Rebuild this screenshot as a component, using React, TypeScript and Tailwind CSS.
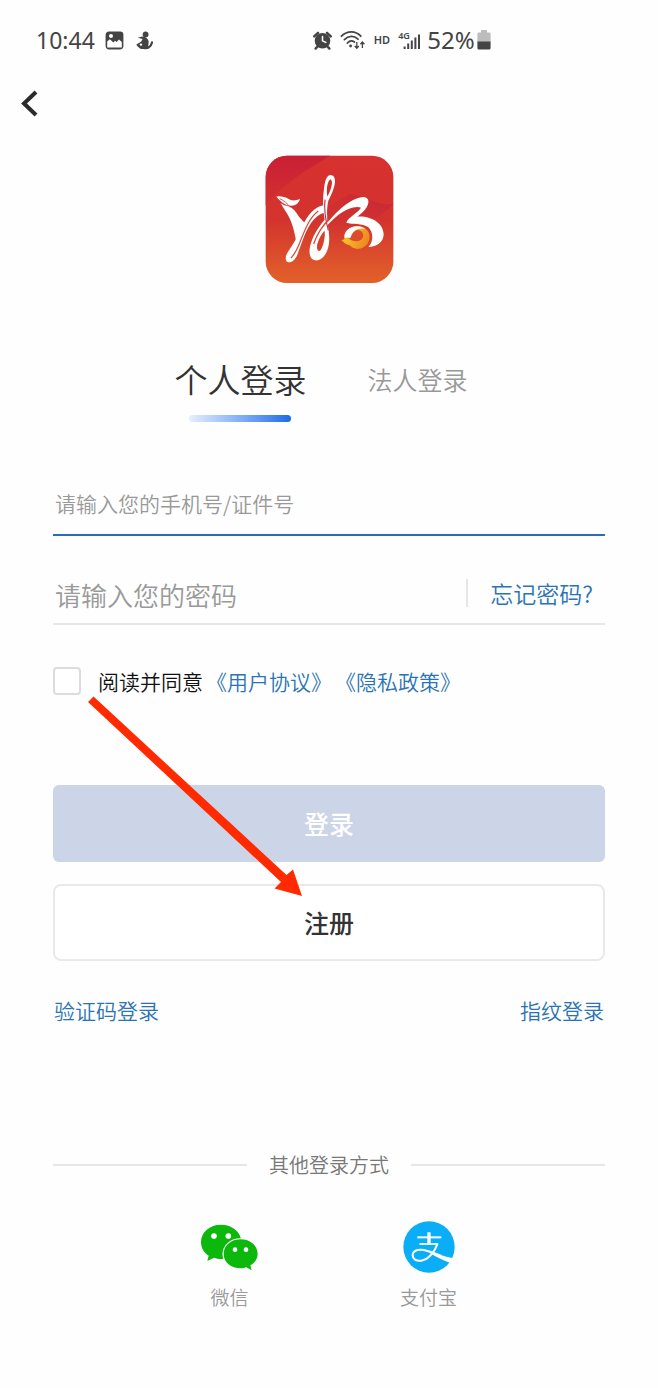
import type { ReactNode } from "react";

function PhotoIcon() {
  return (
    <svg className="h-[19px] w-[19px]" viewBox="0 0 19 19" aria-hidden="true">
      <rect x="1.3" y="1.3" width="16.4" height="16.4" rx="2.6" fill="#444" stroke="#444" strokeWidth="1.4" />
      <path d="M2.2 10.4 4.8 8.2 8.4 11.6 10 9.8 11.6 11 14 8.6 16.8 11V16.6H2.2Z" fill="#fff" />
      <circle cx="6" cy="5" r="2" fill="#fff" />
    </svg>
  );
}

function FigureIcon() {
  return (
    <svg className="h-[19px] w-[17px]" viewBox="0 0 17 19" aria-hidden="true">
      <circle cx="9.6" cy="3.4" r="2.9" fill="#444" />
      <path d="M1.8 6.8 6.2 5.4 9 6C12.4 7.6 13.2 10.4 12.4 13.2L12 18H5C3.4 16.8 1 15.4.4 13.4L5.2 10.6 6.6 8Z" fill="#444" />
      <path d="M7.6 16.6C11.4 18 15 16 16 11.4" fill="none" stroke="#444" strokeWidth="2.2" strokeLinecap="round" />
      <circle cx="4.9" cy="13.6" r="1.2" fill="#fff" />
    </svg>
  );
}

function AlarmIcon() {
  return (
    <svg className="h-[19px] w-[19px]" viewBox="0 0 19 19" aria-hidden="true">
      <circle cx="9.5" cy="9.8" r="7.8" fill="#444" />
      <path d="M1.2 5.4 5 1.8M14 1.8 17.8 5.4M4.4 15.6 2.6 17.6M14.6 15.6 16.4 17.6" stroke="#444" strokeWidth="2.4" strokeLinecap="round" />
      <path d="M9.5 5.4V9.8L12.8 11.4" fill="none" stroke="#fff" strokeWidth="1.5" strokeLinecap="round" />
    </svg>
  );
}

function WifiIcon() {
  return (
    <svg className="h-[20px] w-[26px]" viewBox="0 0 26 20" aria-hidden="true">
      <g fill="none" stroke="#444" strokeWidth="1.8" strokeLinecap="round">
        <path d="M1.4 6.2C7.2.4 15.6.4 20.8 6.2" />
        <path d="M4.4 9.6C8.4 5.6 14 5.4 18 9.2" />
        <path d="M7.4 13C9.6 10.6 12.2 10.4 14.4 12" />
      </g>
      <circle cx="10.6" cy="16" r="1.4" fill="#444" />
      <path d="M16.8 12V18M14.8 16 16.8 18.2 18.8 16M22.4 18V12.4M20.4 14.2 22.4 12 24.4 14.2" fill="none" stroke="#444" strokeWidth="1.3" />
    </svg>
  );
}

function SignalIcon() {
  return (
    <span className="grid">
      <span className="col-start-1 row-start-1 self-start text-[9px] leading-[9px] font-semibold">4G</span>
      <svg className="col-start-1 row-start-1 h-[19px] w-[23px]" viewBox="0 0 23 19" aria-hidden="true">
        <path d="M6.6 15.6V18M10.2 12.6V18M13.8 9.6V18M17.4 6.4V18M21 3.4V18" stroke="#444" strokeWidth="2" />
      </svg>
    </span>
  );
}

function BatteryIcon() {
  return (
    <svg className="h-[20px] w-[14px]" viewBox="0 0 14 20" aria-hidden="true">
      <path d="M4 0H10V2.4H12.4Q13.6 2.4 13.6 3.6V12H.4V3.6Q.4 2.4 1.6 2.4H4Z" fill="#bdbdbd" />
      <path d="M.4 11.4H13.6V18Q13.6 19.6 12 19.6H2Q.4 19.6.4 18Z" fill="#444" />
    </svg>
  );
}

function BrandLogo() {
  return (
    <svg className="h-[129px] w-[129px]" viewBox="28 32 387 387" role="img" aria-label="湘">
      <defs>
        <linearGradient id="logoBase" x1="0" y1="0" x2="0" y2="1">
          <stop offset="0" stopColor="#d73030" />
          <stop offset="0.5" stopColor="#d3332d" />
          <stop offset="1" stopColor="#e2622a" />
        </linearGradient>
        <linearGradient id="logoShade" x1="0" y1="0" x2="0" y2="1">
          <stop offset="0" stopColor="#c91f35" />
          <stop offset="1" stopColor="#d3302f" />
        </linearGradient>
        <linearGradient id="logoBand" x1="0.7" y1="0" x2="0.2" y2="1">
          <stop offset="0" stopColor="#c3203a" stopOpacity="0.55" />
          <stop offset="1" stopColor="#d6402b" stopOpacity="0" />
        </linearGradient>
        <linearGradient id="logoSwirl" x1="0" y1="0" x2="1" y2="0.4">
          <stop offset="0" stopColor="#fbd62e" />
          <stop offset="1" stopColor="#ee8a22" />
        </linearGradient>
        <clipPath id="logoClip">
          <rect x="30" y="34" width="383" height="382" rx="64" />
        </clipPath>
      </defs>
      <g clipPath="url(#logoClip)">
        <rect x="28" y="32" width="387" height="387" fill="url(#logoBase)" />
        <path d="M28 32H225C160 75 90 110 28 185Z" fill="url(#logoShade)" />
        <path d="M415 178C370 225 310 245 250 290L150 330V230L280 150C320 150 370 190 415 178Z" fill="url(#logoBand)" />
      </g>

      <path d="M93 184C108 188 117 196 126 211C133 222 143 231 152 240C140 260 128 284 123 306C120 273 111 236 95 209C88 197 81 187 74 175C80 180 86 183 93 184Z" fill="#fff" />
      <path d="M62 157C82 153 94 162 105 167C114 170 124 168 133 164C129 177 119 185 105 184C87 183 76 172 62 157Z" fill="#fff" />
      <path d="M72 163C84 168 94 177 106 190" fill="none" stroke="#d9352f" strokeWidth="2.5" />

      <path d="M204 183C178 186 155 213 140 246C127 275 113 300 99 319C90 331 87 345 94 352C104 358 118 348 125 331C137 301 147 264 166 236C177 220 190 209 205 205Z" fill="#fff" />
      <path d="M188 200C161 220 148 256 134 291C127 309 118 329 106 341" fill="none" stroke="#d9452e" strokeWidth="3.5" />

      <path d="M225 92C246 94 240 128 218 169C213 190 213 220 217 246C222 275 222 298 216 315C208 339 193 350 178 348C159 344 158 319 167 293C174 270 190 246 207 226C202 199 200 164 205 133C208 108 213 92 225 92Z" fill="#fff" />
      <path d="M225 105C215 109 211 135 215 157C226 137 234 112 225 105Z" fill="#d2302f" />
      <path d="M185 299C190 280 199 267 207 259C209 276 205 298 197 314C191 326 181 319 185 299Z" fill="#d83f2c" />
      <path d="M179 295C190 264 210 238 239 208C266 181 298 159 323 158C339 159 343 172 333 189C326 201 315 210 304 217C350 214 383 239 384 270C384 293 363 308 338 308C353 294 355 265 338 249C321 235 289 241 272 235C275 221 308 204 316 190C302 184 271 193 245 214C219 235 196 262 179 295Z" fill="#fff" />
      <path d="M208 166C205 193 209 225 218 258" fill="none" stroke="#b73649" strokeWidth="3.5" />
      <path d="M174 299C184 269 201 242 227 218" fill="none" stroke="#d9402e" strokeWidth="3.5" />

      <path d="M270 278C269 259 286 244 309 246C337 247 349 274 338 294C325 318 296 319 282 303C272 301 264 295 257 286C261 288 266 286 270 278Z" fill="url(#logoSwirl)" />
      <path d="M278 280C281 260 302 251 317 261C329 273 321 288 308 290C295 293 283 287 278 280Z" fill="#dc4c2b" />
      <path d="M266 282C263 261 284 244 307 246C315 246 322 249 328 254C309 248 291 258 284 281C278 278 273 279 266 282Z" fill="#fff" />
    </svg>
  );
}

function WechatIcon() {
  return (
    <svg className="h-[52px] w-[60px]" viewBox="32 46 180 156" aria-hidden="true">
      <path d="M95 57C61 57 35 80 35 109C35 126 43 141 58 150L54 166L74 156C81 158 88 160 95 160C129 160 156 137 156 109C156 80 129 57 95 57Z" fill="#0cb80c" />
      <path d="M154 101C125 101 103 120 103 145C103 170 125 188 154 188C160 188 166 187 171 185L187 194L183 179C197 171 205 159 205 145C205 120 183 101 154 101Z" fill="#0cb80c" stroke="#fff" strokeWidth="7" paintOrder="stroke" />
      <g fill="#fff">
        <circle cx="74" cy="91" r="8.5" />
        <circle cx="117" cy="91" r="8.5" />
        <circle cx="137" cy="132" r="7" />
        <circle cx="170" cy="132" r="7" />
      </g>
    </svg>
  );
}

function AlipayIcon() {
  return (
    <svg className="h-[52px] w-[52px]" viewBox="637 48 156 156" aria-hidden="true">
      <circle cx="715" cy="126" r="77" fill="#0aaef7" />
      <g fill="none" stroke="#fff">
        <path d="M680 97H752" strokeWidth="6" />
        <path d="M715 82V119" strokeWidth="10" />
        <path d="M686 117H741" strokeWidth="5" />
        <path d="M741 115C733 138 716 162 692 167C676 169 666 162 666 151C666 139 678 133 692 134C712 135 732 146 752 153" strokeWidth="6" />
      </g>
      <path d="M716 136C738 148 760 155 788 160L781 174C758 166 736 155 716 143Z" fill="#fff" />
    </svg>
  );
}

function Provider({ icon, label }: { icon: ReactNode; label: string }) {
  return (
    <button type="button" className="flex w-[60px] flex-col items-center gap-2.5">
      {icon}
      <span className="text-[19px] leading-7 whitespace-nowrap text-[#999]">{label}</span>
    </button>
  );
}

export default function App() {
  return (
    <div className="min-h-screen bg-[#fefefe] pb-16 font-['Noto_Sans_CJK_SC',sans-serif] font-[350] text-[#333]">
      <header>
        <div className="flex h-20 items-center pl-9 font-['Noto_Sans',sans-serif] font-normal text-[#444]">
          <span className="text-[23px]">10:44</span>
          <span className="ml-2.5 flex items-center gap-3">
            <PhotoIcon />
            <FigureIcon />
          </span>
          <span className="ml-40 flex items-center">
            <AlarmIcon />
            <span className="ml-2 flex"><WifiIcon /></span>
            <span className="ml-2 text-[11px] font-semibold">HD</span>
            <span className="ml-2 flex"><SignalIcon /></span>
            <span className="ml-1.5 text-2xl">52%</span>
            <span className="ml-0.5 flex"><BatteryIcon /></span>
          </span>
        </div>
        <div className="flex h-[46px] items-center pl-5">
          <button type="button" aria-label="返回" className="flex">
            <svg className="h-7 w-5" viewBox="0 0 20 28" fill="none" aria-hidden="true">
              <path d="M16 3 4 14.5 16 26" stroke="#2b2b2b" strokeWidth="4" />
            </svg>
          </button>
        </div>
      </header>

      <main className="px-[53px]">
        <div className="mt-[29px] flex justify-center">
          <BrandLogo />
        </div>

        <div role="tablist" className="mt-[71px] flex items-start justify-center gap-[61px] pr-4">
          <button type="button" role="tab" aria-selected="true" className="flex flex-col items-center gap-3">
            <span className="text-[33px] leading-[48px]">个人登录</span>
            <span className="h-[7px] w-[102px] rounded-full bg-linear-to-r from-[#e6effc] to-[#186ae6]" />
          </button>
          <button type="button" role="tab" aria-selected="false" className="text-[25px] leading-[48px] text-[#999]">
            法人登录
          </button>
        </div>

        <form className="relative mt-[49px]" onSubmit={(e) => e.preventDefault()}>
          <input
            type="text"
            aria-label="手机号/证件号"
            placeholder="请输入您的手机号/证件号"
            className="block h-[65px] w-full border-b-2 border-[#2a6db5] px-0.5 text-[21px] outline-none placeholder:text-[#999]"
          />
          <div className="mt-[30px] flex h-[59px] items-center border-b-2 border-[#e6e6e6]">
            <input
              type="password"
              aria-label="密码"
              placeholder="请输入您的密码"
              className="h-full min-w-0 flex-1 px-0.5 text-[26px] outline-none placeholder:text-[#999]"
            />
            <a href="#forgot" className="mb-1 border-l-2 border-[#e6e6e6] pr-3 pl-[22px] text-[23px] leading-7 text-[#2b74b3]">
              忘记密码?
            </a>
          </div>

          <div className="mt-[42px] flex items-center">
            <input
              id="agree"
              type="checkbox"
              className="h-7 w-7 shrink-0 appearance-none rounded-sm border-2 border-[#dcdcdc] bg-white checked:bg-[#2a6db5]"
            />
            <div className="ml-[17px] flex gap-[3px] text-[21px] leading-7 whitespace-nowrap text-[#2b74b3]">
              <label htmlFor="agree" className="text-[#111]">阅读并同意</label>
              <a href="#terms">《用户协议》</a>
              <a href="#privacy">《隐私政策》</a>
            </div>
          </div>

          <div className="mt-[90px] flex flex-col gap-[22px] text-[25px] font-medium">
            <button type="submit" className="h-[77px] rounded-md bg-[#cbd5e7] text-white">登录</button>
            <button type="button" className="h-[77px] rounded-lg border-2 border-[#e9e9e9] bg-white">注册</button>
          </div>

          <svg className="pointer-events-none absolute top-[224px] left-[34px] h-[202px] w-[216px]" viewBox="87 695 216 202" aria-hidden="true">
            <path d="M93.5 696.5 286.5 875 293 869.5 302 896 274.5 888.5 281 882 88 702Z" fill="#ff2a00" />
          </svg>
        </form>

        <div className="mt-[34px] flex justify-between px-px text-[21px] leading-[30px] text-[#2b74b3]">
          <a href="#code">验证码登录</a>
          <a href="#fingerprint">指纹登录</a>
        </div>

        <div className="mt-[125px] flex items-center gap-[22px] text-xl leading-[30px] text-[#777]">
          <span className="h-0.5 flex-1 bg-[#e6e6e6]" />
          其他登录方式
          <span className="h-0.5 flex-1 bg-[#e6e6e6]" />
        </div>

        <div className="mt-[41px] flex justify-center gap-[139px]">
          <Provider icon={<WechatIcon />} label="微信" />
          <Provider icon={<AlipayIcon />} label="支付宝" />
        </div>
      </main>
    </div>
  );
}
